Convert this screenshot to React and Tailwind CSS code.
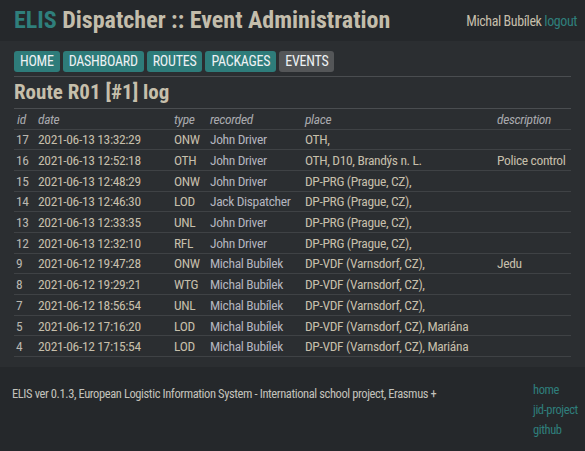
import React from 'react';

const rows = [
    ['17', '2021-06-13 13:32:29', 'ONW', 'John Driver', 'OTH,', ''],
    ['16', '2021-06-13 12:52:18', 'OTH', 'John Driver', 'OTH, D10, Brandýs n. L.', 'Police control'],
    ['15', '2021-06-13 12:48:29', 'ONW', 'John Driver', 'DP-PRG (Prague, CZ),', ''],
    ['14', '2021-06-13 12:46:30', 'LOD', 'Jack Dispatcher', 'DP-PRG (Prague, CZ),', ''],
    ['13', '2021-06-13 12:33:35', 'UNL', 'John Driver', 'DP-PRG (Prague, CZ),', ''],
    ['12', '2021-06-13 12:32:10', 'RFL', 'John Driver', 'DP-PRG (Prague, CZ),', ''],
    ['9', '2021-06-12 19:47:28', 'ONW', 'Michal Bubílek', 'DP-VDF (Varnsdorf, CZ),', 'Jedu'],
    ['8', '2021-06-12 19:29:21', 'WTG', 'Michal Bubílek', 'DP-VDF (Varnsdorf, CZ),', ''],
    ['7', '2021-06-12 18:56:54', 'UNL', 'Michal Bubílek', 'DP-VDF (Varnsdorf, CZ),', ''],
    ['5', '2021-06-12 17:16:20', 'LOD', 'Michal Bubílek', 'DP-VDF (Varnsdorf, CZ), Mariána', ''],
    ['4', '2021-06-12 17:15:54', 'LOD', 'Michal Bubílek', 'DP-VDF (Varnsdorf, CZ), Mariána', ''],
];

const nav = ['HOME', 'DASHBOARD', 'ROUTES', 'PACKAGES', 'EVENTS'];

const App = () => {
    return (
        <div className="w-[585px] h-[451px] flex flex-col bg-[#25282b] text-[#c6bfab] overflow-hidden font-['Roboto',sans-serif] font-stretch-condensed">
            <header className="h-[41px] shrink-0 flex items-start justify-between px-[14px] bg-[#25282b]">
                <h1 className="text-[24px] font-bold leading-none mt-[8px] whitespace-nowrap text-[#c3bdab]">
                    <span className="text-[#2f7f7c]">ELIS</span> Dispatcher :: Event Administration
                </h1>
                <div className="text-[14px] tracking-[-0.4px] mt-[11px] mr-[-6px] whitespace-nowrap">
                    Michal Bubílek <span className="text-[#2f7f7c]">logout</span>
                </div>
            </header>

            <main className="h-[326px] shrink-0 bg-[#2b2e31] px-[14px] pt-[10px] flex flex-col">
                <nav className="flex gap-[3px] pb-[4px] border-b border-[#4a4d50]">
                    {nav.map((n) => (
                        <span
                            key={n}
                            className={`h-[21px] px-[6px] rounded-[3px] text-[14px] tracking-[-0.25px] leading-[21px] text-[#eef1f4] ${n === 'EVENTS' ? 'bg-[#545658]' : 'bg-[#2e7c7a]'}`}
                        >
                            {n}
                        </span>
                    ))}
                </nav>
                <h2 className="text-[21px] font-bold leading-[31px] border-b border-[#4a4d50]">Route R01 [#1] log</h2>
                <table className="w-full border-collapse text-[13.5px] leading-[18px] tracking-[-0.35px] table-fixed">
                    <colgroup>
                        <col className="w-[21px]" />
                        <col className="w-[136px]" />
                        <col className="w-[36px]" />
                        <col className="w-[95px]" />
                        <col className="w-[192px]" />
                        <col />
                    </colgroup>
                    <thead>
                        <tr className="h-[20px] border-b border-[#3f4245] italic text-[#a8a9ad]">
                            {['id', 'date', 'type', 'recorded', 'place', 'description'].map((h) => (
                                <th key={h} className="text-left font-normal px-[3px] py-0">{h}</th>
                            ))}
                        </tr>
                    </thead>
                    <tbody>
                        {rows.map((r) => (
                            <tr key={r[0]} className="h-[20.7px] border-b border-[#3f4245]">
                                <td className="px-[2px] py-0 text-[#b9b7b0]">{r[0]}</td>
                                <td className="px-[3px] py-0 whitespace-nowrap">{r[1]}</td>
                                <td className="px-[3px] py-0">{r[2]}</td>
                                <td className="px-[3px] py-0 text-[#b3b4bf] whitespace-nowrap">{r[3]}</td>
                                <td className="px-[3px] py-0 whitespace-nowrap">{r[4]}</td>
                                <td className="px-[3px] py-0 whitespace-nowrap">{r[5]}</td>
                            </tr>
                        ))}
                    </tbody>
                </table>
            </main>

            <footer className="flex-1 flex justify-between pl-[12px] pr-[7px] pt-[16px] text-[12.5px] tracking-[-0.4px]">
                <p className="mt-[2px] text-[#c3c2bc] whitespace-nowrap">ELIS ver 0.1.3, European Logistic Information System - International school project, Erasmus +</p>
                <ul className="w-[45px] mt-[-3px] leading-[20px] text-[#2f7f7c] whitespace-nowrap">
                    <li>home</li>
                    <li>jid-project</li>
                    <li>github</li>
                </ul>
            </footer>
        </div>
    );
};

export default App;
